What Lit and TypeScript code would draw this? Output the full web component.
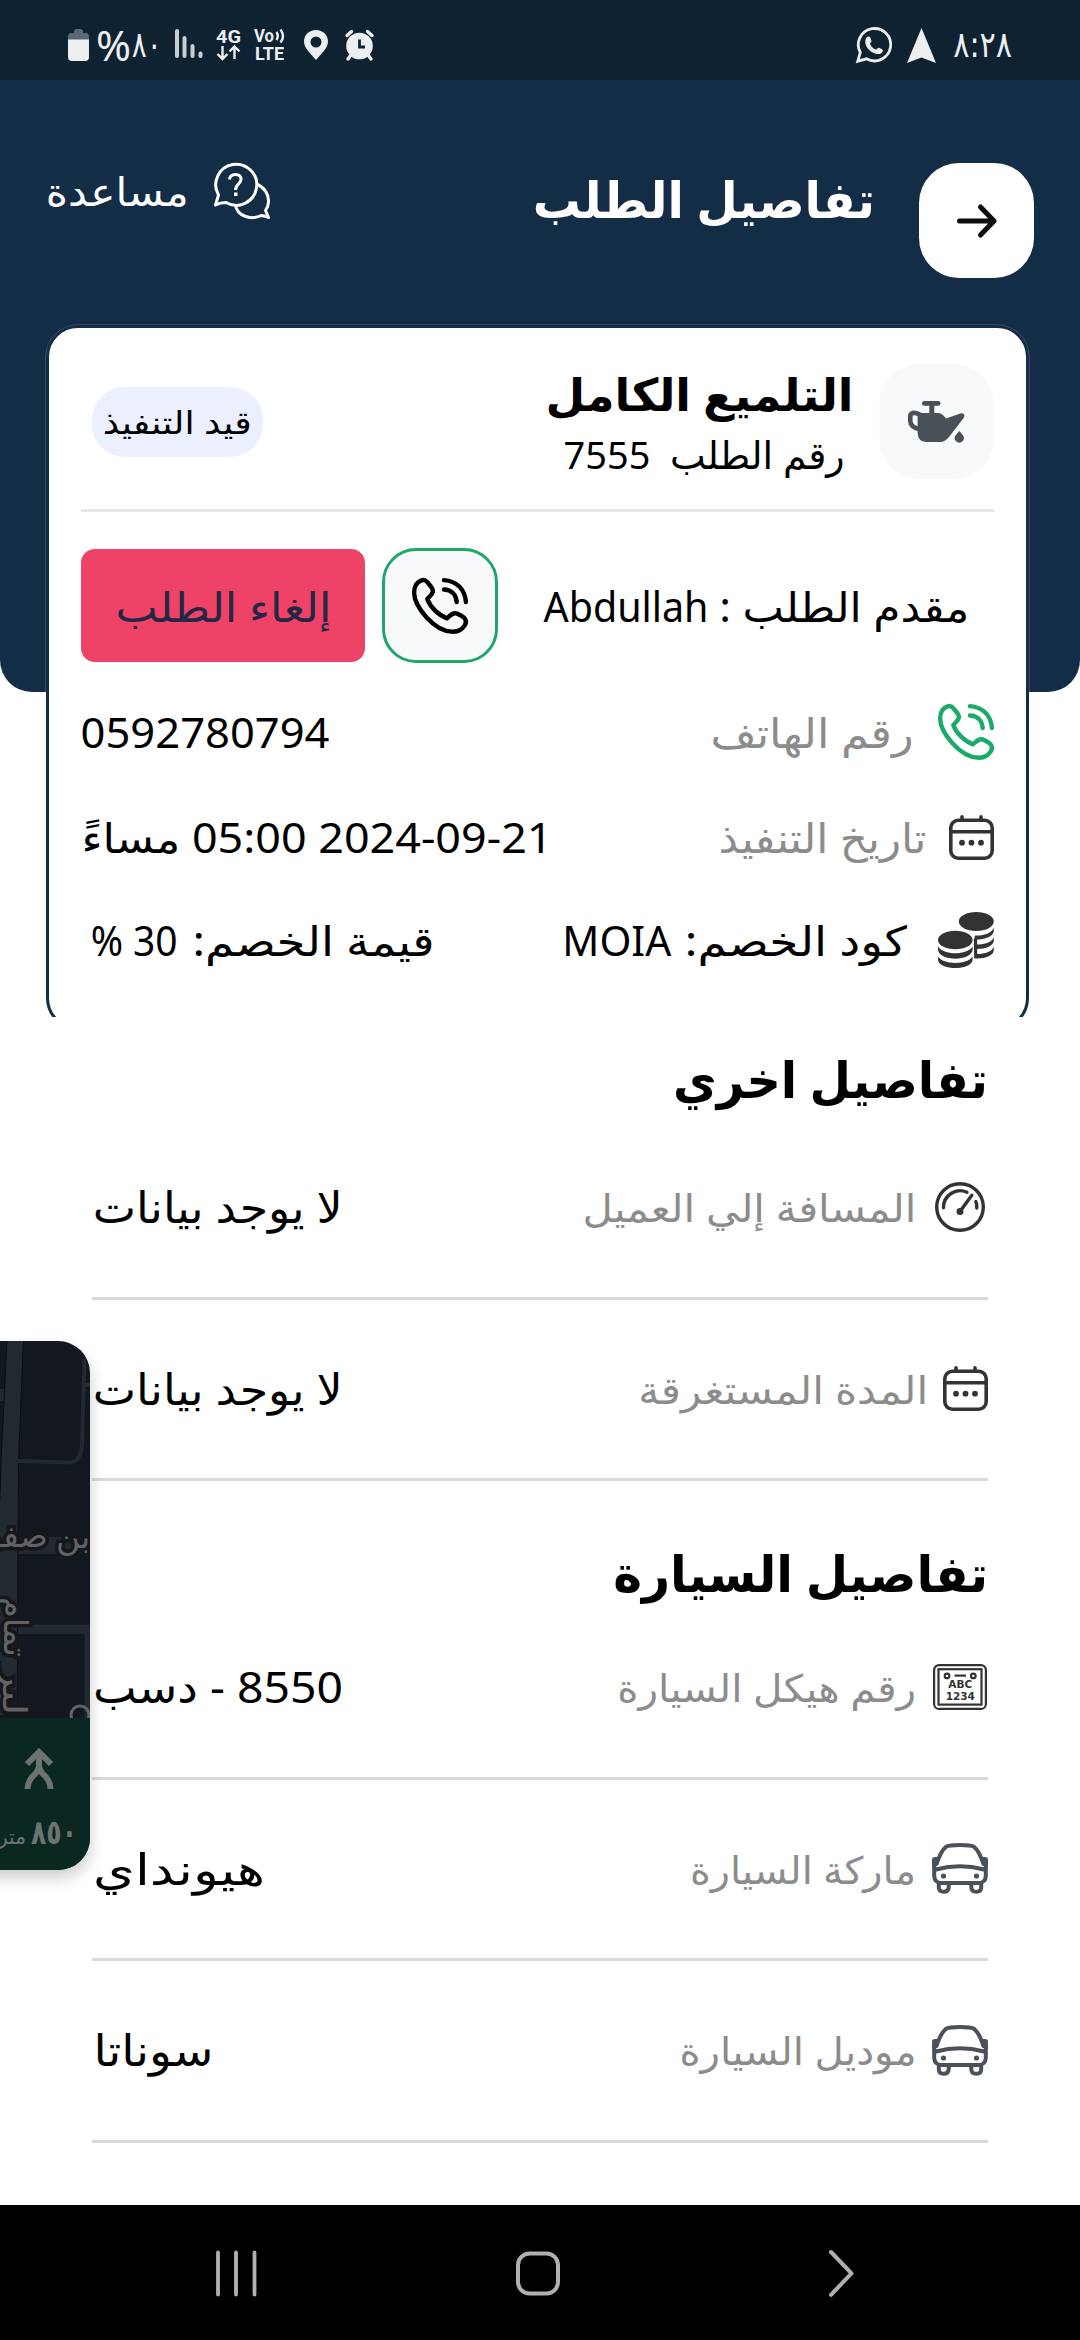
import { LitElement, html, css, svg } from "lit";
import { customElement, property } from "lit/decorators.js";

/** A single line of text squeezed or stretched to a given width. */
@customElement("fit-text")
class FitText extends LitElement {
  @property() text = "";
  @property({ type: Number }) w = 100;

  static styles = css`
    :host { display: block; flex: none; white-space: pre; }
    .line { display: inline-block; transform-origin: 100% 50%; }
    .box { display: flex; justify-content: flex-start; direction: rtl; }
  `;

  updated() {
    const line = this.renderRoot.querySelector(".line") as HTMLElement;
    line.style.transform = "none";
    const natural = line.getBoundingClientRect().width;
    if (natural > 0) line.style.transform = `scaleX(${this.w / natural})`;
  }

  render() {
    return html`<div class="box" style="width:${this.w}px"><span class="line">${this.text}</span></div>`;
  }
}

const phone = svg`<g fill="none" stroke="currentColor" stroke-width="4.4" stroke-linecap="round" stroke-linejoin="round">
  <path d="M9.500 2.300C4.500 4 2.100 8.500 2.100 14.500C2.100 28 22 53.800 41 53.800C47.500 53.800 50 51 52.700 47.500C54.500 44.500 54.200 41.500 51.500 39.200C49 37.300 46.500 36 44.500 35.300C41 34.500 38.500 37 35 40.300C27 37.500 18 29 15.300 21C18 18 21 16 20.900 12.800C20.500 9.500 17 6.500 15 3.800C13.500 2 11.500 1.700 9.500 2.300Z"/>
  <path d="M32 2.100C44.500 3 53 11 53.900 24M32 11.500C39.500 11.800 44 16.500 44.700 24"/></g>`;

const calendar = svg`<g fill="none" stroke="#333" stroke-width="3.6" stroke-linecap="round">
  <rect x="1.800" y="5.300" width="41.400" height="37.900" rx="7.500"/><path d="M2 16.800H43M13 1.900V5M32 1.900V5"/></g>
  <circle cx="13" cy="27.700" r="2.900" fill="#333"/><circle cx="22.500" cy="27.700" r="2.900" fill="#333"/><circle cx="32" cy="27.700" r="2.900" fill="#333"/>`;

const coins = svg`<g fill="#333">
  <ellipse cx="38.300" cy="9.500" rx="17.500" ry="9.400"/><ellipse cx="17.300" cy="28" rx="17.300" ry="9.300"/>
  <path d="M0 34.500C5 43.500 29.600 43.500 34.600 34.500V38C33 49.500 1.600 49.500 0 38Z"/>
  <path d="M0 44.500C5 53 29.600 53 34.600 44.500V48C33 58.700 1.600 58.700 0 48Z"/>
  <path d="M55.800 15.500C54 21 46 24 37 23.500L36 27.500C46 28 55 25 55.800 19Z"/>
  <path d="M55.800 25C54 30.500 47 32.500 39 32.500V37C48 37 55.500 34 55.800 28.500Z"/>
  <path d="M55.800 34.500C54 40 47 42 39 42V46.500C48 46.500 55.500 43.500 55.800 38Z"/>
  <path d="M35.800 27H39.200V46.500H36.200Z"/></g>`;

const gauge = svg`<g fill="none" stroke="#333" stroke-width="3.400" stroke-linecap="round">
  <circle cx="28" cy="25" r="23.300"/><path d="M11.500 25.700A16.600 16.600 0 0 1 35 10.300M28 29.500L39.800 13.200M43.800 19.500Q44.900 22 44.800 26"/></g>
  <circle cx="28" cy="29.500" r="3.500" fill="#333"/>`;

const plate = svg`<g fill="none" stroke="#333" stroke-width="2.200">
  <rect x="2.100" y="1.100" width="51.800" height="43.800" rx="5"/><rect x="6.500" y="5.200" width="43" height="35.400"/>
  <circle cx="15" cy="11.900" r="2.300"/><circle cx="41.300" cy="11.900" r="2.300"/><path d="M22.500 11.600H34"/></g>
  <text class="plate" x="28.200" y="24.200" text-anchor="middle" textLength="24">ABC</text>
  <text class="plate" x="28.200" y="35.600" text-anchor="middle" textLength="29">1234</text>`;

const car = svg`<g fill="none" stroke="#4a5159" stroke-width="4" stroke-linecap="round" stroke-linejoin="round">
  <path d="M4.500 21Q9 7.500 14 3.800Q17 2 28 2T42 3.800Q47 7.500 51.500 21"/>
  <path d="M4 26.500Q16 23.200 28 23.200T52 26.500M2.200 17V33Q2.500 39.500 9 40H47Q53.500 39.500 53.800 33V17"/>
  <path d="M6.800 41V44.500Q7 48.800 11.700 48.800T16.700 44.500V41M39.300 41V44.500Q39.500 48.800 44.300 48.800T49.200 44.500V41"/></g>
  <path d="M0 17Q0 14 3 14H6L4 24H0ZM56 17Q56 14 53 14H50L52 24H56Z" fill="#4a5159"/>
  <circle cx="11.500" cy="33" r="2.600" fill="#4a5159"/><circle cx="44.500" cy="33" r="2.600" fill="#4a5159"/>`;

const icon = (w: number, h: number, body: unknown, cls = "") =>
  html`<svg class="icon ${cls}" width=${w} height=${h} viewBox="0 0 ${w} ${h}">${body}</svg>`;

interface Row { icon: unknown; gap: number; label: string; lw: number; value: string; vw: number; }

const other: Row[] = [
  { icon: icon(56, 50, gauge), gap: 16, label: "المسافة إلي العميل", lw: 334, value: "لا يوجد بيانات", vw: 250 },
  { icon: icon(45, 45, calendar), gap: 15, label: "المدة المستغرقة", lw: 290, value: "لا يوجد بيانات", vw: 250 },
];
const vehicle: Row[] = [
  { icon: icon(56, 46, plate), gap: 16, label: "رقم هيكل السيارة", lw: 299, value: "8550 - دسب", vw: 250 },
  { icon: icon(56, 51, car), gap: 16, label: "ماركة السيارة", lw: 226, value: "هيونداي", vw: 172 },
  { icon: icon(56, 51, car), gap: 16, label: "موديل السيارة", lw: 237, value: "سوناتا", vw: 120 },
];

@customElement("app-root")
class AppRoot extends LitElement {
  static styles = css`
    :host {
      display: block; width: 1080px; height: 2340px; position: relative; overflow: hidden; background: #fff;
      color: #000; font-family: "Noto Sans", "DejaVu Sans", sans-serif; font-size: 41px; line-height: 60px;
    }
    * { box-sizing: border-box; }
    .icon { display: block; flex: none; overflow: visible; }
    .screen { direction: rtl; display: flex; flex-direction: column; height: 2340px; }
    .status {
      direction: ltr; height: 80px; background: #0f2232; color: #eceef0; display: flex; align-items: center;
      padding: 10px 68px 0 68px; line-height: 36px; flex: none;
    }
    .percent { font-size: 41px; margin-left: 7px; }
    .level { font-size: 36px; margin-left: 1px; font-family: "DejaVu Sans", sans-serif; }
    .clock { font-size: 36px; margin-left: 17px; font-family: "DejaVu Sans", sans-serif; }
    .sp { flex: 1; }
    .tiny { font: 700 18.500px/18px Roboto, sans-serif; fill: #eceef0; }
    .hero { display: grid; flex: none; height: 937px; overflow: hidden; }
    .backdrop { grid-area: 1 / 1; height: 612px; background: #142d46; border-radius: 0 0 32px 32px; }
    .front { grid-area: 1 / 1; display: flex; flex-direction: column; padding: 83px 46px 0; }
    .bar { display: flex; align-items: flex-start; height: 162px; color: #fff; flex: none; }
    .back { width: 115px; height: 115px; border-radius: 40px; background: #fff; display: grid; place-items: center; margin-left: 44px; flex: none; }
    .h1 { font-size: 50px; font-weight: 700; line-height: 73px; }
    .help { display: flex; align-items: center; gap: 25px; height: 55px; font-size: 39px; }
    .card {
      width: 983px; height: 705px; flex: none; margin-right: 5px; border: 3px solid #142d46; border-radius: 32px; background: #fff;
      box-shadow: 0 0 0 0.6px rgba(255, 255, 255, 0.25); padding: 36px 32px 0; display: flex; flex-direction: column;
    }
    .head { display: flex; align-items: flex-start; height: 115px; }
    .tile { width: 115px; height: 115px; border-radius: 40px; background: #f8f9fb; display: grid; place-items: center; margin-left: 26px; }
    .name { font-size: 45px; font-weight: 700; }
    .number { font-size: 38px; padding-right: 8px; }
    .badge { align-self: center; margin-left: 11px; width: 171px; height: 70px; border-radius: 33px; background: #ecefff; display: grid; place-items: center; font-size: 32px; }
    .rule { height: 3px; background: #e6e6e6; margin: 30px 0 36px; flex: none; }
    .actions { display: flex; align-items: center; gap: 17px; height: 115px; margin-bottom: 39px; flex: none; }
    .who { display: flex; gap: 11px; padding-right: 25px; }
    .call { width: 116px; height: 115px; border: 3px solid #20a66b; border-radius: 34px; background: #f8f9fb; display: grid; place-items: center; }
    .cancel { width: 284px; height: 113px; border-radius: 14px; background: #ee4266; color: #232745; display: grid; place-items: center; }
    .info { display: flex; align-items: center; height: 60px; margin-bottom: 45px; flex: none; }
    .info.date { margin-bottom: 43px; }
    .pair { display: flex; gap: 14px; }
    .green { color: #1aab6b; }
    .muted { color: #8c8c8c; }
    .list { padding: 0 92px; flex: none; }
    .h2 { font-size: 50px; font-weight: 700; line-height: 74px; height: 101px; padding-top: 25px; }
    .h2.second { height: 117px; padding-top: 55px; }
    .row { display: flex; align-items: center; height: 181.500px; border-bottom: 3px solid #d9d9d9; padding-left: 1px; }
    .row .muted { font-size: 38px; }
    .row .value { font-size: 43px; }
    .plate { font: 700 10.500px "DejaVu Sans", sans-serif; fill: #333; }
    .nav { margin-top: auto; height: 135px; background: #000; flex: none; direction: ltr; display: flex; align-items: flex-start; padding: 46px 0 0 216px; }
    .home { margin: 0 269px 0 259px; }
    .map { position: absolute; left: 0; top: 1341px; width: 90px; height: 529px; border-radius: 0 32px 32px 0; overflow: hidden; background: #13171f; }
    .shade { position: absolute; left: -40px; top: 1341px; width: 130px; height: 529px; border-radius: 32px; box-shadow: 0 8px 16px rgba(0, 0, 0, 0.2); }
    .street { font: 33px "DejaVu Sans", sans-serif; fill: #626266; stroke: #15171a; stroke-width: 7px; paint-order: stroke; }
    .dist { font: 700 34px "DejaVu Sans", sans-serif; fill: #6c7472; }
    .unit { font: 21px "DejaVu Sans", sans-serif; fill: #6c7472; }
  `;

  private rows(list: Row[]) {
    return list.map(
      (r) => html`<div class="row">
        ${r.icon}
        <fit-text class="muted" style="margin-right:${r.gap}px" .text=${r.label} .w=${r.lw}></fit-text>
        <span class="sp"></span>
        <fit-text class="value" .text=${r.value} .w=${r.vw}></fit-text>
      </div>`
    );
  }

  render() {
    return html`
      <div class="screen">
        <div class="status">
          ${icon(21, 32, svg`<path d="M6 3Q6 0 9 0H12Q15 0 15 3V4H18Q21 4 21 8V12H0V8Q0 4 3 4H6Z" fill="#5c6973"/><path d="M0 10.500H21V28Q21 32 17 32H4Q0 32 0 28Z" fill="#eceef0"/>`)}
          <fit-text class="percent" text="%" w="35"></fit-text>
          <fit-text class="level" text="٨٠" w="30"></fit-text>
          ${icon(124, 34, svg`
            <g fill="#c9ced2"><rect x="13" y="1" width="4" height="29" rx="2"/><rect x="20.500" y="8" width="4" height="22" rx="2"/><rect x="28.500" y="16" width="4" height="14" rx="2"/><rect x="36.500" y="23.500" width="4" height="6.500" rx="2"/></g>
            <text class="tiny" x="54" y="14.500" textLength="25" lengthAdjust="spacingAndGlyphs">4G</text>
            <path d="M60.500 18V30M55.500 26L60.500 31L65.500 26M72.500 31V19M67.500 23.500L72.500 18.500L77.500 23.500" fill="none" stroke="#eceef0" stroke-width="2.400"/>
            <text class="tiny" x="92" y="14" textLength="20" lengthAdjust="spacingAndGlyphs">Vo</text>
            <path d="M114.500 4Q117 8 114.500 12M118.500 1.500Q123.500 8 118.500 14.500" fill="none" stroke="#eceef0" stroke-width="2.400"/>
            <text class="tiny" x="93" y="31.500" textLength="29" lengthAdjust="spacingAndGlyphs">LTE</text>`)}
          ${icon(90, 32, svg`<path fill="#eceef0" fill-rule="evenodd" d="M30 1C37 1 42 6 42 12.500C42 19 36 24 30 31C24 24 18 19 18 12.500C18 6 23 1 30 1ZM30 7.500A5.500 5.500 0 1 0 30 18.500A5.500 5.500 0 1 0 30 7.500Z"/>
            <circle cx="73.500" cy="17" r="13.300" fill="#eceef0"/><path d="M73.500 10.500V18H79" fill="none" stroke="#0f2232" stroke-width="2.800"/><path d="M61 6.500L65.500 2.500M86 6.500L81.500 2.500M65 26L62 30M82 26L85 30" stroke="#eceef0" stroke-width="3.400" stroke-linecap="round"/>`)}
          <span class="sp"></span>
          ${icon(36, 36, svg`<path d="M1.800 34.200L4.300 25.500A16.200 16.200 0 1 1 10.500 31.800Z" fill="none" stroke="#eceef0" stroke-width="2.800"/><path d="M10.500 10.500C12 9 14 9.500 14.500 11L15.500 14C15.800 15 14 16 14 16.700C15 19.500 17.500 21.800 20 22.500C21 22.500 22 20.500 23 20.800L26.500 22.500C27.500 23.500 26.500 25.500 25 26.500C20 28.500 14 24.500 11.500 21C9 17.500 8.500 13 10.500 10.500Z" fill="#eceef0"/>`)}
          <svg class="icon" width="44" height="35" viewBox="-15 0 44 35"><path d="M14.500 0L29 35L14.500 29.500L0 35Z" fill="#eceef0"/></svg>
          <fit-text class="clock" text="٨:٢٨" w="59"></fit-text>
        </div>

        <div class="hero">
          <div class="backdrop"></div>
          <div class="front">
            <div class="bar">
              <div class="back">${icon(40, 34, svg`<path d="M2.500 17H37M23.500 3L37 17L23.500 31" fill="none" stroke="#0d0d0d" stroke-width="5" stroke-linecap="round" stroke-linejoin="round"/>`)}</div>
              <fit-text class="h1" text="تفاصيل الطلب" w="342"></fit-text>
              <span class="sp"></span>
              <div class="help">
                ${icon(56, 56, svg`<g fill="none" stroke="#fff" stroke-width="3" stroke-linejoin="round"><path d="M1.500 42L4.500 32A20.500 20.500 0 1 1 12 39.500Q6 39.500 1.500 42Z"/><path d="M42.500 21C50 24 55 31 54.500 39Q54.300 43.500 51.500 47.500L54.500 54.500Q50 52.500 47 52.500C37 57.500 23 53 21.500 42"/><path d="M15.500 16.500Q16 11.500 21.500 11.500T27 16.500C27 21 21.500 21 21.500 27"/></g><rect x="20" y="29.500" width="3.500" height="3.500" fill="#fff"/>`)}
                <fit-text text="مساعدة" w="143"></fit-text>
              </div>
            </div>

            <div class="card">
              <div class="head">
                <div class="tile">${icon(57, 42, svg`<g fill="#4a5058"><path d="M9.600 14Q10 12 12.500 12H31Q35 13 38 17.500L53 12.300Q57.500 12 56 16.500L41 36Q37 41 32 41H18Q10 40.500 9.600 32Z"/><rect x="14" y="0" width="18.500" height="4.800" rx="2.400"/><rect x="21.300" y="3" width="5" height="10"/><path d="M51.300 30Q56 35 56 37A4.700 4.700 0 0 1 46.600 37Q46.600 35 51.300 30Z"/></g><path d="M12 13.500Q2.300 9.500 2.300 15.500V20Q2.300 26 12 28.500" fill="none" stroke="#4a5058" stroke-width="4.600"/>`)}</div>
                <div>
                  <fit-text class="name" text="التلميع الكامل" w="308"></fit-text>
                  <fit-text class="number" text="رقم الطلب  7555" w="281"></fit-text>
                </div>
                <span class="sp"></span>
                <div class="badge"><fit-text text="قيد التنفيذ" w="149"></fit-text></div>
              </div>
              <div class="rule"></div>
              <div class="actions">
                <div class="who"><fit-text text="مقدم الطلب :" w="250"></fit-text><fit-text text="Abdullah" w="165"></fit-text></div>
                <span class="sp"></span>
                <div class="call">${icon(56, 56, phone)}</div>
                <div class="cancel"><fit-text text="إلغاء الطلب" w="216"></fit-text></div>
              </div>
              <div class="info">
                ${icon(56, 56, phone, "green")}
                <fit-text class="muted" style="margin-right:25px" text="رقم الهاتف" w="203"></fit-text>
                <span class="sp"></span><fit-text text="0592780794" w="249"></fit-text>
              </div>
              <div class="info date">
                ${icon(45, 45, calendar)}
                <fit-text class="muted" style="margin-right:22px" text="تاريخ التنفيذ" w="208"></fit-text>
                <span class="sp"></span><fit-text text="2024-09-21 05:00 مساءً" w="471"></fit-text>
              </div>
              <div class="info">
                ${icon(56, 56, coins)}
                <div class="pair" style="margin-right:31px"><fit-text text="كود الخصم:" w="222"></fit-text><fit-text text="MOIA" w="109"></fit-text></div>
                <span class="sp"></span>
                <div class="pair" style="margin-left:10px"><fit-text text="قيمة الخصم:" w="242"></fit-text><fit-text text="30 %" w="87"></fit-text></div>
              </div>
            </div>
          </div>
        </div>

        <div class="list">
          <div class="h2"><fit-text text="تفاصيل اخري" w="315"></fit-text></div>
          ${this.rows(other)}
          <div class="h2 second"><fit-text text="تفاصيل السيارة" w="375"></fit-text></div>
          ${this.rows(vehicle)}
        </div>

        <div class="nav">
          ${icon(41, 45, svg`<path d="M2 1.500V43.500M20 1.500V43.500M38.500 1.500V43.500" stroke="#b0b0b0" stroke-width="3.800" stroke-linecap="round"/>`)}
          ${icon(44, 45, svg`<rect x="2" y="2.500" width="40" height="40" rx="11.500" fill="none" stroke="#b0b0b0" stroke-width="4"/>`, "home")}
          ${icon(25, 45, svg`<path d="M2 1L22.500 22.300L2 43.800" fill="none" stroke="#b0b0b0" stroke-width="4" stroke-linecap="round" stroke-linejoin="round"/>`)}
        </div>
      </div>

      <div class="shade"></div>
      <div class="map">
        ${icon(90, 529, svg`
          <g fill="#222930">
            <path d="M-2 48H8V60H-2ZM17 196H91V213H17ZM18 283.500H91V293H18ZM84.500 292H91V378H84.500Z"/>
            <path d="M7 -2H23.500L18.500 121L17 378H-2V180Q1 150 1 121Z" stroke="#0c0f12" stroke-width="1"/>
          </g>
          <path d="M84.500 18L82 104Q81 120 70 121.500L18 120M82 44H91" fill="none" stroke="#222930" stroke-width="4"/>
          <text class="street" x="56" y="207">بن</text>
          <text class="street" x="-14" y="206">صفو</text>
          <text class="street" transform="translate(4 256) rotate(90)" x="0" y="0" textLength="60" lengthAdjust="spacingAndGlyphs">تمام</text>
          <text class="street" transform="translate(3 326) rotate(90)" x="0" y="0" textLength="60" lengthAdjust="spacingAndGlyphs">البر</text>
          <circle cx="80" cy="374" r="9" fill="none" stroke="#626266" stroke-width="3"/>
          <rect x="0" y="377" width="90" height="152" fill="#0b2721"/>
          <path d="M39 410V424Q39 430 33 435Q27.500 441 27.500 448M39 424Q39 430 45 435Q50.500 441 50.500 448M27 423L39 411L51 423" fill="none" stroke="#6c7472" stroke-width="6"/>
          <text class="dist" x="31" y="503" textLength="46" lengthAdjust="spacingAndGlyphs">٨٥٠</text>
          <text class="unit" x="-2" y="503" textLength="28" lengthAdjust="spacingAndGlyphs">متر</text>`)}
      </div>
    `;
  }
}
